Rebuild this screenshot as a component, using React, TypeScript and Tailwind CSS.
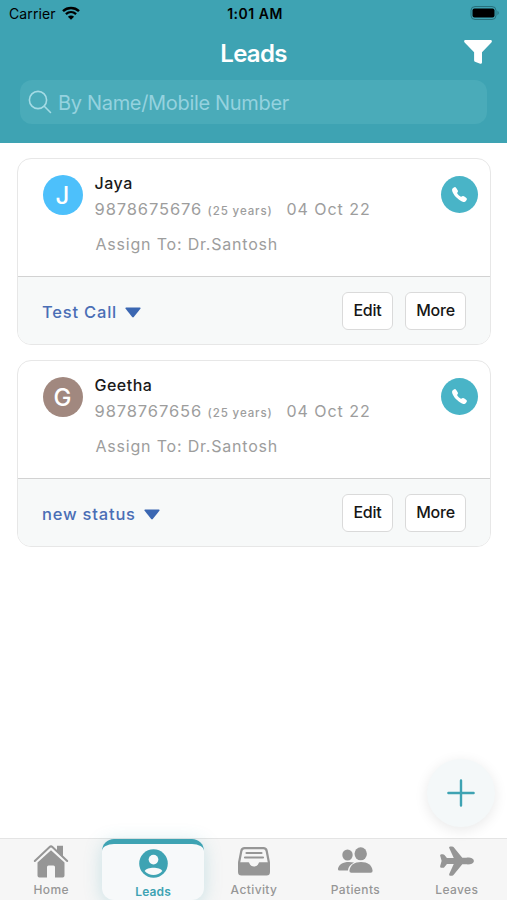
import React from 'react';
import { IoAirplane, IoCall } from 'react-icons/io5';

type Lead = {
	name: string;
	phone: string;
	age: string;
	date: string;
	assignee: string;
	status: string;
	avatarClass: string;
};

type IconProps = { className?: string };

const LEADS: Lead[] = [
	{
		name: 'Jaya',
		phone: '9878675676',
		age: '(25 years)',
		date: '04 Oct 22',
		assignee: 'Dr.Santosh',
		status: 'Test Call',
		avatarClass: 'bg-[#4dc0fb]',
	},
	{
		name: 'Geetha',
		phone: '9878767656',
		age: '(25 years)',
		date: '04 Oct 22',
		assignee: 'Dr.Santosh',
		status: 'new status',
		avatarClass: 'bg-[#a1887f]',
	},
];

const HomeIcon = ({ className }: IconProps) => (
	<svg viewBox="0 0 36 36" className={className} fill="currentColor">
		<path
			d="M1.8 18 16.6 4q1.4-1.2 2.8 0l14.8 14"
			fill="none"
			stroke="currentColor"
			strokeWidth="2"
			strokeLinecap="round"
		/>
		<path d="M24 2.8h6v11.4l-6-5.600z" />
		<path d="M18 7.2 31.500 19.400v13.200q0 1.900-1.900 1.900h-7.600V24q0-1.500-1.500-1.500h-5q-1.500 0-1.500 1.500v10.500H6.400q-1.900 0-1.900-1.900V19.400z" />
	</svg>
);

const LeadsIcon = ({ className }: IconProps) => (
	<svg viewBox="0 0 36 36" className={className}>
		<circle cx="18" cy="18" r="14.7" fill="currentColor" />
		<circle cx="18" cy="14" r="5" fill="#f7f9fa" />
		<path d="M8.9 25.6C11.4 21.3 24.6 21.3 27.1 25.6 22.5 31.1 13.5 31.1 8.900 25.600z" fill="#f7f9fa" />
	</svg>
);

const ActivityIcon = ({ className }: IconProps) => (
	<svg viewBox="0 0 36 36" className={className} fill="none" stroke="currentColor">
		<path d="M3 20 5.3 8q.5-2.800 3.300-2.800h18.800q2.800 0 3.300 2.800L33 20" strokeWidth="2.2" />
		<path d="M10.5 10h15M9 14.500h18" strokeWidth="2.2" strokeLinecap="round" />
		<path
			d="M2 19.200h10.200q1 0 1.300 1.300c1.200 4 7.800 4 9 0q.3-1.300 1.300-1.300H34v9.800q0 3.500-3.500 3.500h-25Q2 32.500 2 29z"
			fill="currentColor"
			stroke="none"
		/>
	</svg>
);

const PatientsIcon = ({ className }: IconProps) => (
	<svg viewBox="0 0 36 36" className={className} fill="currentColor">
		<ellipse cx="10.5" cy="12" rx="5.2" ry="5.500" />
		<ellipse cx="23.7" cy="10.8" rx="6.2" ry="6.500" />
		<path d="M17 19.600C13 22 11.400 24.200 10.900 27.500H2.400Q.9 27.500.9 26C2 20.400 8.500 17.800 17 19.600z" />
		<path d="M24 19c6.500 0 11 3.400 11.600 8.700q.1 2-1.900 2H14.300q-2 0-1.900-2C13 22.400 17.500 19 24 19z" />
	</svg>
);

const TABS = [
	{ label: 'Home', icon: HomeIcon },
	{ label: 'Leads', icon: LeadsIcon },
	{ label: 'Activity', icon: ActivityIcon },
	{ label: 'Patients', icon: PatientsIcon },
	{ label: 'Leaves', icon: IoAirplane },
];

const StatusBar = () => (
	<div className="grid h-7 grid-cols-[1fr_auto_1fr] items-center pr-1.5 pl-[9px] text-[14px] leading-none text-black">
		<div className="flex items-center gap-1.5">
			<span className="tracking-[0.1px]">Carrier</span>
			<svg viewBox="0 0 18 14" className="-mt-0.5 h-3.5 w-[18px]">
				<path
					d="M1 5.1C5.6.9 12.4.9 17 5.1"
					fill="none"
					stroke="currentColor"
					strokeWidth="2.5"
				/>
				<path
					d="M3.9 8.1c3-2.7 7.2-2.7 10.2 0"
					fill="none"
					stroke="currentColor"
					strokeWidth="2.3"
				/>
				<path d="M9 13.8 5.9 10.7c1.8-1.6 4.4-1.6 6.2 0z" fill="currentColor" />
			</svg>
		</div>
		<div className="font-semibold tracking-[0.5px]">1:01 AM</div>
		<svg viewBox="0 0 32 14" className="-mt-0.5 h-3.5 w-8 justify-self-end">
			<rect
				x="2"
				y=".5"
				width="25"
				height="13"
				rx="4"
				fill="none"
				stroke="#27717c"
			/>
			<rect x="3.5" y="2.5" width="22" height="9" rx="2" fill="#000" />
			<path d="M28.5 4.8q2.5 2.2 0 4.4z" fill="#27717c" />
		</svg>
	</div>
);

const Header = () => (
	<header className="h-[142.5px] bg-[#3ea3b3]">
		<StatusBar />
		<div className="grid h-[52px] grid-cols-[1fr_auto_1fr] items-center px-[15px]">
			<h1 className="col-start-2 text-[24px] leading-none font-semibold tracking-[-0.7px] text-white">
				Leads
			</h1>
			<svg viewBox="0 0 28 24" className="-mt-1 h-6 w-7 justify-self-end">
				<path
					d="M1 0h26q1.6 1 .4 2.4L18 12.3v10.3q-.3 1.6-1.8 1.1L11 21.8q-.9-.5-.9-1.5v-8L.6 2.4Q-.6 1 1 0z"
					fill="#fff"
				/>
			</svg>
		</div>
		<div className="mx-5 flex h-[44px] items-center gap-1.5 rounded-xl bg-[#4aabb9] px-2">
			<svg
				viewBox="0 0 24 24"
				className="size-6 text-[#a4dbe5]"
				fill="none"
				stroke="currentColor"
				strokeWidth="1.6"
				strokeLinecap="round"
			>
				<circle cx="10" cy="10" r="8.6" />
				<path d="m16.3 16.3 6.2 6.2" />
			</svg>
			<span className="mt-0.5 text-[20px] leading-none tracking-[-0.32px] text-[#95d2df]">
				By Name/Mobile Number
			</span>
		</div>
	</header>
);

const ActionButton = ({ label, className }: { label: string; className: string }) => (
	<button
		className={`h-[38px] rounded-md border-[1.5px] border-[#dadada] bg-white pb-0.5 text-[16px] leading-none font-medium tracking-[-0.2px] text-[#161616] ${className}`}
	>
		{label}
	</button>
);

const LeadCard = ({ lead }: { lead: Lead }) => (
	<article className="h-[187px] overflow-hidden rounded-[14px] border-[1.5px] border-[#e7e7e7] bg-white">
		<div className="flex h-[117px] pt-4 pr-3 pl-[24.5px]">
			<div
				className={`flex size-10 items-center justify-center rounded-full pt-0.5 text-[24px] font-medium text-white ${lead.avatarClass}`}
			>
				{lead.name[0]}
			</div>
			<div className="ml-3 flex-1 text-[16px] text-[#9d9d9d]">
				<div className="h-[17px] leading-[17px] font-medium tracking-[0.5px] text-[#1a1a1a]">
					{lead.name}
				</div>
				<div className="mt-2 flex h-[18px] items-baseline leading-[18px]">
					<span className="w-[113px] text-[16.5px] tracking-[0.9px]">{lead.phone}</span>
					<span className="w-[79px] text-[11.5px] font-medium tracking-[0.9px]">
						{lead.age}
					</span>
					<span className="tracking-[0.95px]">{lead.date}</span>
				</div>
				<div className="mt-[17px] ml-px leading-[18px] tracking-[0.8px]">
					Assign To: {lead.assignee}
				</div>
			</div>
			<div className="mt-px flex size-[37px] items-center justify-center rounded-full bg-[#49b4c7]">
				<IoCall className="size-[17px] text-white" />
			</div>
		</div>
		<div className="flex h-[68px] items-center border-t-[1.5px] border-[#d2d2d2] bg-[#f7f9f9] px-6">
			<span className="mt-[3px] text-[16.5px] leading-none font-medium tracking-[0.8px] text-[#4a6eb5]">
				{lead.status}
			</span>
			<svg viewBox="0 0 16 11" className="mt-[3px] ml-2 h-[11px] w-4">
				<path d="M1 .5h14q1 .2.4 1.2L8.8 10q-.8.8-1.6 0L.6 1.7Q0 .7 1 .5z" fill="#3b67b2" />
			</svg>
			<div className="ml-auto flex gap-3">
				<ActionButton label="Edit" className="w-[51px]" />
				<ActionButton label="More" className="w-[61px]" />
			</div>
		</div>
	</article>
);

const TabBar = ({ active }: { active: string }) => (
	<nav className="grid h-[62px] grid-cols-5 border-t border-[#e4e4e4] bg-[#f6f6f6]">
		{TABS.map(({ label, icon: Icon }) =>
			label === active ? (
				<div
					key={label}
					className="-mr-px ml-px flex flex-col items-center rounded-xl border-t-[5px] border-[#3ea3b3] bg-[#f7f9fa] pt-[2px] text-[#3ea3b3] shadow-[0_3px_18px_rgba(62,163,179,0.25)]"
				>
					<Icon className="size-[35px]" />
					<span className="mt-[4px] text-[12px] leading-[14px] font-semibold tracking-[0.1px]">
						{label}
					</span>
				</div>
			) : (
				<div key={label} className="flex flex-col items-center pt-1 pl-px text-[#969696]">
					<Icon className="size-9" />
					<span className="mt-1 text-[12px] leading-[14px] font-medium tracking-[0.4px]">
						{label}
					</span>
				</div>
			),
		)}
	</nav>
);

const App = () => (
	<div className="relative flex h-[900px] w-[507px] flex-col overflow-hidden bg-white font-['Inter','Liberation_Sans',sans-serif]">
		<Header />
		<main className="flex flex-1 flex-col gap-[15px] pt-[15.5px] pr-4 pl-[17px]">
			{LEADS.map((lead) => (
				<LeadCard key={lead.phone} lead={lead} />
			))}
		</main>
		<button className="absolute right-3 bottom-[73px] flex size-[68px] items-center justify-center rounded-full bg-[#f4f8f9] shadow-[0_3px_14px_rgba(0,0,0,0.09)]">
			<svg
				viewBox="0 0 28 28"
				className="size-7"
				stroke="#3ea3b3"
				strokeWidth="2.4"
				strokeLinecap="round"
			>
				<path d="M14 1.4v25.2M1.4 14h25.2" />
			</svg>
		</button>
		<TabBar active="Leads" />
	</div>
);

export default App;
